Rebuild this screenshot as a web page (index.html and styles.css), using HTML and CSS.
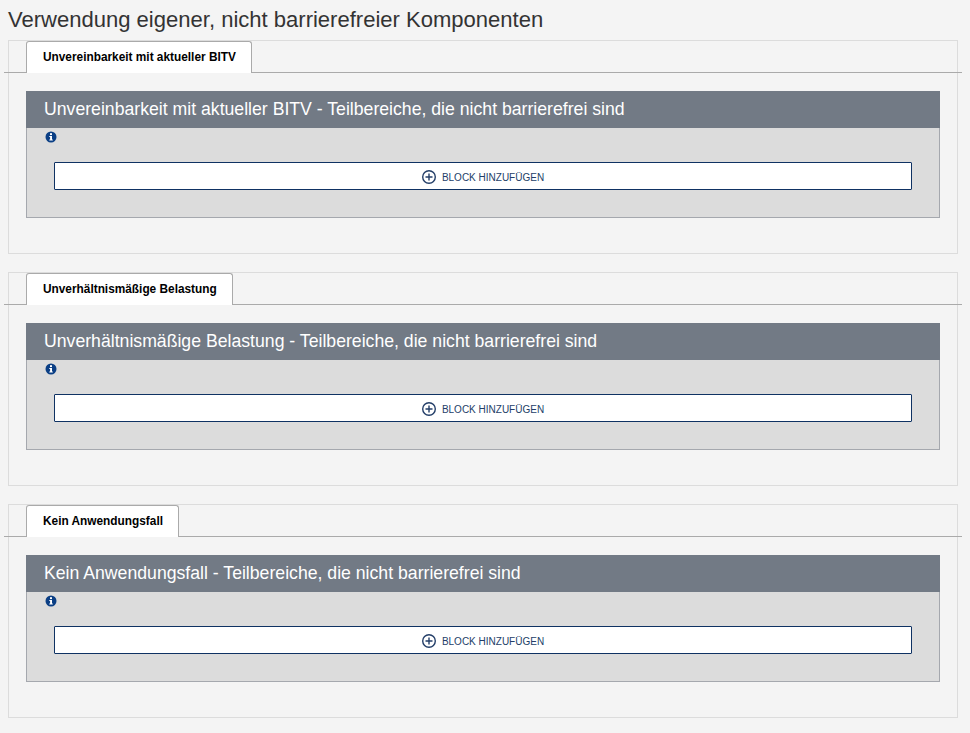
FILE: index.html
```html
<!DOCTYPE html>
<html lang="de">

<head>
  <meta charset="UTF-8">
  <title>Verwendung eigener, nicht barrierefreier Komponenten</title>
  <link rel="stylesheet" href="styles.css">
</head>

<body>
  <h1 class="page-title">Verwendung eigener, nicht barrierefreier Komponenten</h1>

  <section class="panel">
    <div class="tabs">
      <a class="tab" href="#">Unvereinbarkeit mit aktueller BITV</a>
    </div>
    <div class="block">
      <h2 class="block-head">Unvereinbarkeit mit aktueller BITV - Teilbereiche, die nicht barrierefrei sind</h2>
      <div class="block-body">
        <svg class="info" viewBox="0 0 12 12" aria-hidden="true">
          <circle cx="6" cy="6" r="5.5" fill="#0b3f85" />
          <rect x="5" y="2.2" width="2" height="1.9" fill="#fff" />
          <path d="M4.3 5h2.7v3.6h.8v1H4.3v-1h.8V6h-.8z" fill="#fff" />
        </svg>
        <button class="add-btn" type="button">
          <svg class="plus" viewBox="0 0 16 16" aria-hidden="true">
            <circle cx="8" cy="8" r="6.3" />
            <path d="M8 4.5v7M4.5 8h7" />
          </svg>
          BLOCK HINZUFÜGEN
        </button>
      </div>
    </div>
  </section>

  <section class="panel">
    <div class="tabs">
      <a class="tab" href="#">Unverhältnismäßige Belastung</a>
    </div>
    <div class="block">
      <h2 class="block-head">Unverhältnismäßige Belastung - Teilbereiche, die nicht barrierefrei sind</h2>
      <div class="block-body">
        <svg class="info" viewBox="0 0 12 12" aria-hidden="true">
          <circle cx="6" cy="6" r="5.5" fill="#0b3f85" />
          <rect x="5" y="2.2" width="2" height="1.9" fill="#fff" />
          <path d="M4.3 5h2.7v3.6h.8v1H4.3v-1h.8V6h-.8z" fill="#fff" />
        </svg>
        <button class="add-btn" type="button">
          <svg class="plus" viewBox="0 0 16 16" aria-hidden="true">
            <circle cx="8" cy="8" r="6.3" />
            <path d="M8 4.5v7M4.5 8h7" />
          </svg>
          BLOCK HINZUFÜGEN
        </button>
      </div>
    </div>
  </section>

  <section class="panel">
    <div class="tabs">
      <a class="tab" href="#">Kein Anwendungsfall</a>
    </div>
    <div class="block">
      <h2 class="block-head">Kein Anwendungsfall - Teilbereiche, die nicht barrierefrei sind</h2>
      <div class="block-body">
        <svg class="info" viewBox="0 0 12 12" aria-hidden="true">
          <circle cx="6" cy="6" r="5.5" fill="#0b3f85" />
          <rect x="5" y="2.2" width="2" height="1.9" fill="#fff" />
          <path d="M4.3 5h2.7v3.6h.8v1H4.3v-1h.8V6h-.8z" fill="#fff" />
        </svg>
        <button class="add-btn" type="button">
          <svg class="plus" viewBox="0 0 16 16" aria-hidden="true">
            <circle cx="8" cy="8" r="6.3" />
            <path d="M8 4.5v7M4.5 8h7" />
          </svg>
          BLOCK HINZUFÜGEN
        </button>
      </div>
    </div>
  </section>
</body>

</html>
```

FILE: styles.css
```css
body {
  font-family: "Liberation Sans", Arial, sans-serif;
  background: #f4f4f4;
  color: #333;
  margin: 0;
  padding: 0 12px 16px 8px;
  overflow-x: hidden;
}

.page-title {
  font-size: 22.04px;
  font-weight: normal;
  line-height: 24px;
  margin: 0;
  padding: 8px 0;
  color: #333;
}

.panel {
  height: 214px;
  box-sizing: border-box;
  border: 1px solid #dcdcdc;
  margin-bottom: 18px;
}

/* la linea sobresale del panel por los dos lados */
.tabs {
  display: flex;
  height: 31px;
  margin: 0 -5px;
  padding-left: 22px;
  border-bottom: 1px solid #aaa;
}

.tab {
  height: 32px;
  box-sizing: border-box;
  padding: 0 15px 0 16px;
  background: #fff;
  border: 1px solid #aaa;
  border-bottom: 0;
  border-radius: 3px 3px 0 0;
  color: #000;
  font-size: 11.85px;
  font-weight: bold;
  line-height: 31px;
  text-decoration: none;
}

.block {
  margin: 18px 17px 0;
  background: #dcdcdc;
  border: 1px solid #a5a8ae;
  border-top: 0;
}

.block-head {
  margin: 0 -1px;
  height: 37px;
  padding-left: 18px;
  background: #727a85;
  color: #fff;
  font-size: 17.66px;
  font-weight: normal;
  line-height: 37px;
}

.block-body {
  height: 89px;
  box-sizing: border-box;
  padding: 3px 27px 0;
}

.info {
  display: block;
  width: 12px;
  height: 12px;
  margin-left: -9px;
}

.add-btn {
  display: flex;
  align-items: center;
  justify-content: center;
  gap: 5px;
  width: 100%;
  height: 28px;
  margin-top: 19px;
  padding: 3px 1px 0 0;
  background: #fff;
  border: 1px solid #0f3263;
  border-radius: 1px;
  color: #233e68;
  font-family: inherit;
  font-size: 10px;
}

.plus {
  width: 16px;
  height: 16px;
  margin-top: -1px;
  fill: none;
  stroke: #233e68;
  stroke-width: 1.4;
}
```
